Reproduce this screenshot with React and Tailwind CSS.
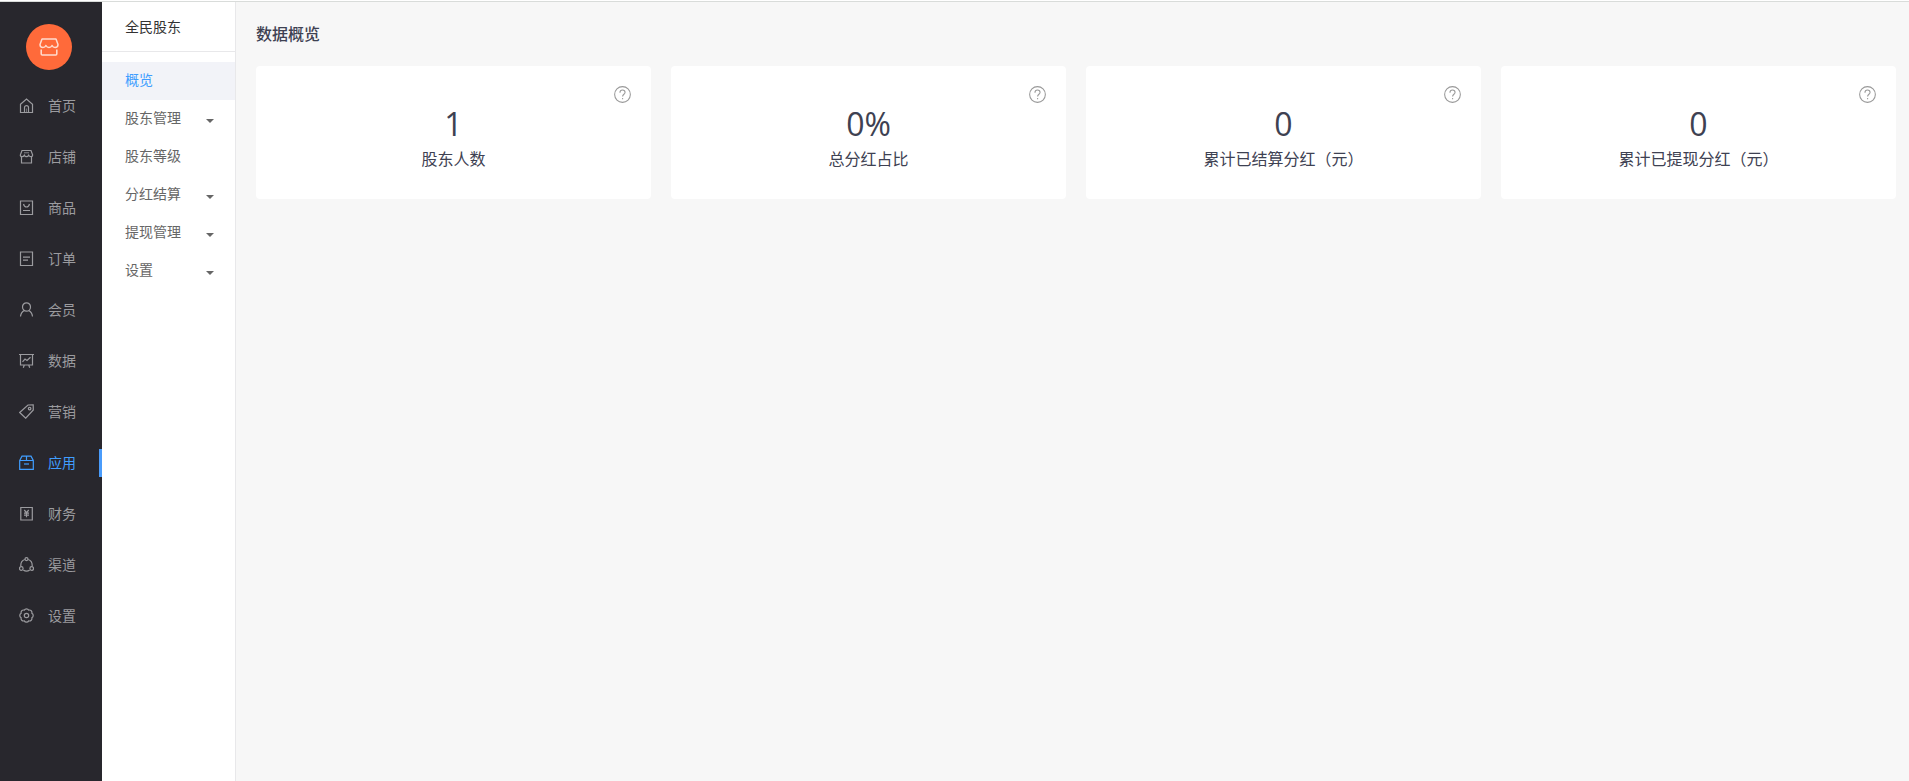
import React from "react";

const icons = {
  home: (
    <>
      <path d="M1.500 6.200 7.500 1l6 5.200v8.300h-12z" />
      <path d="M5.500 14V9.600a2 2 0 0 1 4 0V14" />
      <path d="M7.500 10.500V14" strokeWidth="0.6" />
    </>
  ),
  shop: (
    <>
      <path d="M3 1.500h9l1.700 4.500c0 1-.7 1.700-1.700 1.700S10.100 7 9.700 6.200c-.4.900-1.200 1.500-2.200 1.500S5.700 7.100 5.300 6.200C4.900 7.100 4 7.700 3 7.700S1.300 7 1.300 6z" />
      <path d="M5 3.800h5" strokeWidth="0.8" />
      <path d="M2.500 8v6h10V8" />
    </>
  ),
  goods: (
    <>
      <path d="M1.500 1h12v13.500h-12z" />
      <path d="M4.500 4c.5 2 1.500 3 3 3s2.500-1 3-3M4 10.500h7" />
    </>
  ),
  order: (
    <>
      <path d="M1.500 1h12v13.500h-12z" />
      <path d="M4 6.200h7M4 9.200h5" />
    </>
  ),
  member: (
    <>
      <path d="M7.500 .8a4 4 0 0 1 4 4.100c0 2.200-1.600 4.300-4 4.300s-4-2.100-4-4.300a4 4 0 0 1 4-4.100z" />
      <path d="M5.300 8.500C3 9.700 1.800 11.700 1.500 14.500M9.700 8.500c2.300 1.200 3.500 3.200 3.800 6" />
    </>
  ),
  data: (
    <>
      <path d="M0 1.500h15M1.500 1.500v10.500h12V1.500M5.300 12l-1 2.800M9.700 12l1 2.800" />
      <path d="M3.500 8.800l2.500-2.800 2 1.500 3.500-3.300" />
    </>
  ),
  tag: (
    <>
      <path d="M9 1 14.200.8l.1 5.100-7.600 8.300L.7 8.500z" />
      <circle cx="10.600" cy="4.600" r="1.300" />
    </>
  ),
  app: (
    <>
      <path d="M.7 5.500 3 1.200h9l2.300 4.300v8.800H.7zM.7 5.500h13.600M7.500 1.200v4.300" />
      <path d="M5 9h5" />
    </>
  ),
  finance: (
    <>
      <path d="M1.800 1.500h11.500v12.500H1.800z" />
      <path d="M5.300 4l2.200 2.700L9.700 4M7.500 6.700v4.500M5 7.200h5M5 9.200h5" />
    </>
  ),
  channel: (
    <>
      <path d="M5.800 2.500C3 3.300 1.600 6 1.800 9.500M9.200 2.500c2.800.8 4.200 3.500 4 7M4.300 13c1.800 1.300 4.600 1.300 6.400 0" />
      <circle cx="7.500" cy="2.100" r="1.500" />
      <circle cx="2.300" cy="11.500" r="1.800" />
      <circle cx="12.700" cy="11.500" r="1.800" />
    </>
  ),
  gear: (
    <>
      <path d="M12.860 5.280A2.500 2.500 0 0 1 12.860 9.720A2.500 2.500 0 0 1 9.720 12.860A2.500 2.500 0 0 1 5.280 12.860A2.500 2.500 0 0 1 2.140 9.720A2.500 2.500 0 0 1 2.140 5.280A2.500 2.500 0 0 1 5.280 2.140A2.500 2.500 0 0 1 9.720 2.140A2.500 2.500 0 0 1 12.860 5.280z" />
      <circle cx="7.500" cy="7.500" r="2.200" />
    </>
  ),
};

const mainMenu = [
  { label: "首页", icon: "home" },
  { label: "店铺", icon: "shop" },
  { label: "商品", icon: "goods" },
  { label: "订单", icon: "order" },
  { label: "会员", icon: "member" },
  { label: "数据", icon: "data" },
  { label: "营销", icon: "tag" },
  { label: "应用", icon: "app", active: true },
  { label: "财务", icon: "finance" },
  { label: "渠道", icon: "channel" },
  { label: "设置", icon: "gear" },
];

const subMenu = [
  { label: "概览", active: true },
  { label: "股东管理", expandable: true },
  { label: "股东等级" },
  { label: "分红结算", expandable: true },
  { label: "提现管理", expandable: true },
  { label: "设置", expandable: true },
];

const stats = [
  { value: "1", label: "股东人数" },
  { value: "0%", label: "总分红占比" },
  { value: "0", label: "累计已结算分红（元）" },
  { value: "0", label: "累计已提现分红（元）" },
];

function Logo() {
  return (
    <a
      href="#home"
      aria-label="店铺首页"
      className="ml-[26px] mt-[22px] flex size-[46px] items-center justify-center rounded-full bg-[#ff6a3a] text-[#ffdccf]"
    >
      <svg viewBox="0 0 20 18" className="h-[18px] w-5" fill="none" stroke="currentColor" strokeWidth="1.500" strokeLinejoin="round">
        <path d="M3 1h14l2 5.500c0 1.900-1.300 3-2.900 3-1.400 0-2.500-.8-3-2-.6 1.200-1.700 2-3.100 2s-2.500-.8-3.100-2c-.5 1.200-1.600 2-3 2-1.600 0-2.900-1.100-2.900-3z" />
        <path d="M2.200 11.500V16c0 .6.400 1 1 1h13.600c.6 0 1-.4 1-1v-4.500" />
      </svg>
    </a>
  );
}

function MainNav() {
  return (
    <aside className="w-[102px] shrink-0 bg-[#28272d]">
      <Logo />
      <nav className="mt-2.5">
        {mainMenu.map((item) => (
          <a
            key={item.label}
            href={"#" + item.icon}
            className={
              "flex h-[51px] items-center pl-[19px] text-sm " +
              (item.active ? "text-[#409eff]" : "text-[#9b9b9f]")
            }
          >
            <svg viewBox="0 0 15 15" className="mr-[14px] size-[15px] shrink-0" fill="none" stroke="currentColor" strokeWidth="1.200">
              {icons[item.icon]}
            </svg>
            <span className="pb-0.5">{item.label}</span>
            {item.active && <span className="ml-auto h-7 w-[3px] bg-[#4a9cfb]" />}
          </a>
        ))}
      </nav>
    </aside>
  );
}

function SubNav() {
  return (
    <aside className="w-[134px] shrink-0 border-r border-[#e8e8ea] bg-white">
      <h2 className="flex h-[50px] items-center border-b border-[#e8e8ea] pb-0.5 pl-[23px] text-sm text-[#333333]">
        全民股东
      </h2>
      <nav className="mt-[10px]">
        {subMenu.map((item) => {
          const rowClass = item.active
            ? "flex h-[38px] w-full items-center bg-[#f2f3f8] pb-1 pl-[23px] text-sm text-[#409eff]"
            : "flex h-[38px] w-full items-center justify-between pb-1 pl-[23px] pr-[21px] text-sm text-[#666666]";
          return item.expandable ? (
            <button key={item.label} type="button" className={rowClass}>
              <span>{item.label}</span>
              <svg viewBox="0 0 8 4" className="mt-2 h-1 w-2" fill="currentColor">
                <path d="M0 0h8L4 4z" />
              </svg>
            </button>
          ) : (
            <a key={item.label} href={"#" + item.label} className={rowClass}>
              {item.label}
            </a>
          );
        })}
      </nav>
    </aside>
  );
}

function StatCard({ value, label }) {
  return (
    <article className="relative flex h-[133px] flex-col items-center rounded bg-white pt-[35px] text-[#3e4152]">
      <button type="button" aria-label={label + "说明"} className="absolute right-5 top-5 size-[17px] text-[#999999]">
        <svg viewBox="0 0 16 16" className="size-[17px]" fill="none" stroke="currentColor">
          <circle cx="8" cy="8" r="7.400" strokeWidth="1" />
          <path d="M5.600 6.300c0-1.500 1-2.500 2.400-2.500s2.400.9 2.400 2.200c0 1.700-2.300 1.900-2.300 3.900M8.100 11.300v1.200" strokeWidth="1" />
        </svg>
      </button>
      <p className="font-['Open_Sans',sans-serif] text-[32px] leading-[46px]">{value}</p>
      <p className="text-base leading-[22px]">{label}</p>
    </article>
  );
}

export default function App() {
  return (
    <div className="flex min-h-screen flex-col bg-[#f7f7f7] font-['Noto_Sans_CJK_SC',sans-serif]">
      <div className="h-[2px] border-b border-[#d9dcda] bg-white" />
      <div className="flex grow">
        <MainNav />
        <SubNav />
        <main className="min-w-0 grow pb-5 pl-5 pr-[13px] pt-[19px]">
          <h1 className="text-base font-medium leading-6 text-[#3e4152]">数据概览</h1>
          <section className="mt-[21px] grid grid-cols-4 gap-5">
            {stats.map((stat) => (
              <StatCard key={stat.label} value={stat.value} label={stat.label} />
            ))}
          </section>
        </main>
      </div>
    </div>
  );
}
